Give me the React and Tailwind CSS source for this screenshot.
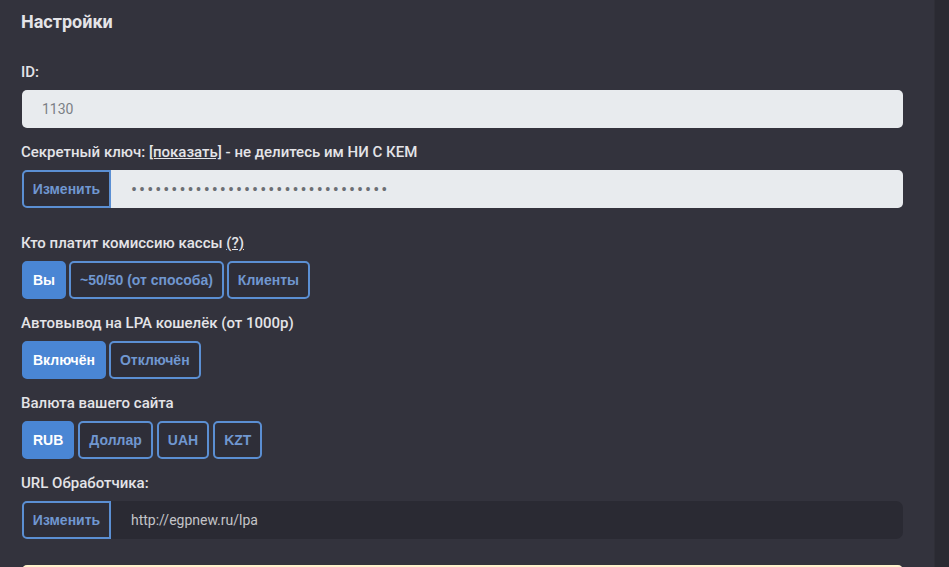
import React from 'react';

const Label = ({ children, className = '' }) => (
  <div className={`text-[15px] font-medium leading-[22px] text-[#e4e4e8] ${className}`}>{children}</div>
);

const btnFont = "font-['Liberation_Sans','Arial',sans-serif] text-[14px] font-bold";

const Btn = ({ active, children }) => (
  <button
    className={`h-[38px] rounded-[5px] border-2 px-[9px] ${btnFont} ${
      active
        ? 'border-[#4a86d4] bg-[#4a86d4] text-white'
        : 'border-[#5b8fd3] bg-[#2e2e38] text-[#7097d0]'
    }`}
  >
    {children}
  </button>
);

const App = () => {
  const dots = '•'.repeat(32);
  return (
    <div className="flex h-[567px] w-full overflow-hidden bg-[#33333d] font-['Roboto',sans-serif]">
      <div className="flex-1 pl-[21px] pt-[11px]">
        <h1 className="text-[18px] font-bold leading-[22px] text-[#e4e4e8]">Настройки</h1>

        {/* ID */}
        <Label className="mt-[28px]">ID:</Label>
        <div className="ml-[1px] mt-[7px] flex h-[38px] w-[881px] items-center rounded-[5px] bg-[#e8ebee] pl-[20px] text-[14px] text-[#7b7f85]">
          1130
        </div>

        {/* Secret key */}
        <Label className="mt-[13px]">
          Секретный ключ: <span className="underline">[показать]</span> - не делитесь им НИ С КЕМ
        </Label>
        <div className="ml-[1px] mt-[7px] flex h-[38px] w-[881px]">
          <button className={`h-[38px] w-[89px] rounded-l-[5px] border-2 border-[#5b8fd3] bg-[#2e2e38] ${btnFont} text-[#7097d0]`}>
            Изменить
          </button>
          <div className="flex flex-1 items-center rounded-r-[5px] bg-[#e8ebee] pl-[20px] text-[18px] tracking-[2px] text-[#6c6f74]">
            {dots}
          </div>
        </div>

        {/* Commission */}
        <Label className="mt-[24px]">
          Кто платит комиссию кассы <span className="underline">(?)</span>
        </Label>
        <div className="ml-[1px] mt-[7px] flex gap-[3px]">
          <Btn active>Вы</Btn>
          <Btn>~50/50 (от способа)</Btn>
          <Btn>Клиенты</Btn>
        </div>

        {/* Auto withdraw */}
        <Label className="mt-[13px]">Автовывод на LPA кошелёк (от 1000р)</Label>
        <div className="ml-[1px] mt-[7px] flex gap-[3px]">
          <Btn active>Включён</Btn>
          <Btn>Отключён</Btn>
        </div>

        {/* Currency */}
        <Label className="mt-[13px]">Валюта вашего сайта</Label>
        <div className="ml-[1px] mt-[7px] flex gap-[4px]">
          <Btn active>RUB</Btn>
          <Btn>Доллар</Btn>
          <Btn>UAH</Btn>
          <Btn>KZT</Btn>
        </div>

        {/* Handler URL */}
        <Label className="mt-[13px]">URL Обработчика:</Label>
        <div className="ml-[1px] mt-[7px] flex h-[38px] w-[881px]">
          <button className={`h-[38px] w-[89px] rounded-l-[5px] border-2 border-[#5b8fd3] bg-[#2e2e38] ${btnFont} text-[#7097d0]`}>
            Изменить
          </button>
          <div className="flex flex-1 items-center rounded-r-[7px] bg-[#2a2a33] pl-[20px] text-[14px] text-[#c4c4c8]">
            http://egpnew.ru/lpa
          </div>
        </div>

        <div className="ml-[1px] mt-[26px] h-[20px] w-[881px] rounded-[5px] bg-[#fff3cd]" />
      </div>

      {/* scrollbar track */}
      <div className="w-[15px] border-l border-[#2f2f37] bg-[#2a2a32]" />
    </div>
  );
};

export default App;
